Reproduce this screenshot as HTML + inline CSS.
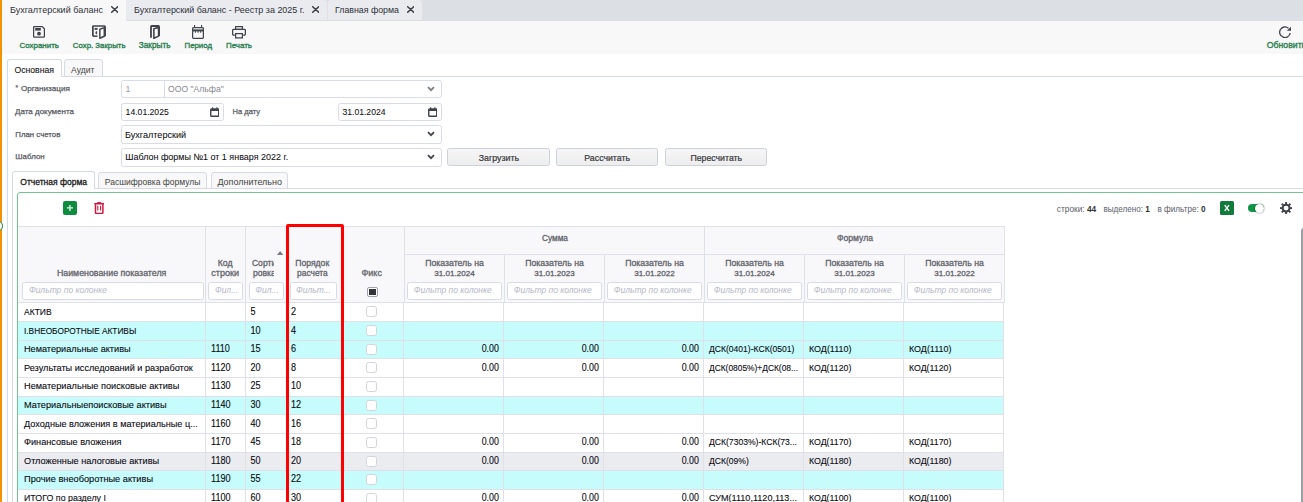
<!DOCTYPE html>
<html><head><meta charset="utf-8"><style>
html,body{margin:0;padding:0;}
body{width:1303px;height:502px;overflow:hidden;position:relative;background:#fff;font-family:"Liberation Sans", sans-serif;}
.t{position:absolute;white-space:nowrap;line-height:1;}
.b{position:absolute;}
</style></head><body>
<div class="b" style="left:0.00px;top:0.00px;width:1303.00px;height:20.60px;background:#dcdfe4"></div>
<div class="b" style="left:2.00px;top:0.00px;width:124.00px;height:21.00px;background:#f8f8f8"></div>
<div class="b" style="left:126.00px;top:0.00px;width:201.00px;height:20.20px;background:#e9ebef;border-radius:0 3px 0 0"></div>
<div class="b" style="left:328.00px;top:0.00px;width:94.00px;height:20.20px;background:#e9ebef;border-radius:3px 3px 0 0"></div>
<div class="t" style="left:10.00px;top:6.00px;font-size:9.02px;color:#2e3038;font-weight:400;">Бухгалтерский баланс</div>
<div class="t" style="left:134.00px;top:6.00px;font-size:8.96px;color:#2e3038;font-weight:400;">Бухгалтерский баланс - Реестр за 2025 г.</div>
<div class="t" style="left:335.00px;top:6.00px;font-size:8.81px;color:#2e3038;font-weight:400;">Главная форма</div>
<svg class="b" style="left:110.7px;top:5.9px" width="7.4" height="7" viewBox="0 0 7.4 7"><path d="M0.7 0.7L6.7 6.3M6.7 0.7L0.7 6.3" stroke="#3c3f48" stroke-width="1.55" stroke-linecap="round"/></svg>
<svg class="b" style="left:311.8px;top:5.9px" width="7.4" height="7" viewBox="0 0 7.4 7"><path d="M0.7 0.7L6.7 6.3M6.7 0.7L0.7 6.3" stroke="#3c3f48" stroke-width="1.55" stroke-linecap="round"/></svg>
<svg class="b" style="left:406.7px;top:5.9px" width="7.4" height="7" viewBox="0 0 7.4 7"><path d="M0.7 0.7L6.7 6.3M6.7 0.7L0.7 6.3" stroke="#3c3f48" stroke-width="1.55" stroke-linecap="round"/></svg>
<div class="b" style="left:2.00px;top:20.60px;width:1301.00px;height:33.00px;background:#f8f8f8"></div>
<div class="t" style="left:19.50px;top:42.00px;font-size:7.95px;color:#2a8050;font-weight:400;-webkit-text-stroke:0.35px #2a8050;">Сохранить</div>
<div class="t" style="left:72.80px;top:42.00px;font-size:7.83px;color:#2a8050;font-weight:400;-webkit-text-stroke:0.35px #2a8050;">Сохр. Закрыть</div>
<div class="t" style="left:138.80px;top:42.00px;font-size:8.23px;color:#2a8050;font-weight:400;-webkit-text-stroke:0.35px #2a8050;">Закрыть</div>
<div class="t" style="left:184.50px;top:42.00px;font-size:7.84px;color:#2a8050;font-weight:400;-webkit-text-stroke:0.35px #2a8050;">Период</div>
<div class="t" style="left:226.00px;top:42.00px;font-size:7.94px;color:#2a8050;font-weight:400;-webkit-text-stroke:0.35px #2a8050;">Печать</div>
<div class="t" style="left:1266.70px;top:41.00px;font-size:8.72px;color:#2a8050;font-weight:400;-webkit-text-stroke:0.35px #2a8050;">Обновить</div>
<svg class="b" style="left:33px;top:26px" width="12" height="12" viewBox="0 0 12 12"><path d="M1.4 0.6H9.2L11.4 2.8V10.4Q11.4 11 10.8 11H1.2Q0.6 11 0.6 10.4V1.4Q0.6 0.6 1.4 0.6Z" fill="none" stroke="#40434c" stroke-width="1.25" stroke-linejoin="round"/><rect x="2.2" y="2" width="5.6" height="2.6" fill="#40434c"/><circle cx="6" cy="7.7" r="1.9" fill="#40434c"/></svg>
<svg class="b" style="left:92px;top:25px" width="14" height="14" viewBox="0 0 14 14"><path d="M0.85 11.2V1.6Q0.85 1 1.5 1H12.4Q13.1 1 13.1 1.7V11.2" fill="none" stroke="#40434c" stroke-width="1.7"/><path d="M0.85 11.2H5.5" stroke="#40434c" stroke-width="1.5"/><path d="M7.85 4.2L12.3 2.6V11.2L7.85 13.2Z" fill="#fff" stroke="#40434c" stroke-width="1.5" stroke-linejoin="round"/><rect x="2.6" y="2.9" width="2.9" height="2" fill="#40434c"/><path d="M5.1 5.9A1.75 1.75 0 0 0 5.1 9.4Z" fill="#40434c"/></svg>
<svg class="b" style="left:150px;top:25px" width="10" height="14" viewBox="0 0 10 14"><path d="M1 12.8V1.6Q1 1 1.6 1H8.4Q9.1 1 9.1 1.7V11" fill="none" stroke="#40434c" stroke-width="1.8"/><path d="M3.9 3.8L8.6 2.2V11.1L3.9 13.3Z" fill="#fff" stroke="#40434c" stroke-width="1.6" stroke-linejoin="round"/></svg>
<svg class="b" style="left:192px;top:25px" width="12" height="14" viewBox="0 0 12 14"><rect x="0.6" y="2.6" width="10.8" height="10.8" rx="1.2" fill="none" stroke="#40434c" stroke-width="1.25"/><rect x="0.6" y="4.4" width="10.8" height="2" fill="#40434c"/><rect x="2" y="0" width="1.1" height="3" fill="#40434c"/><rect x="9" y="0" width="1.1" height="3" fill="#40434c"/><rect x="2.9" y="6" width="1" height="1.8" fill="#40434c"/><rect x="5.6" y="6" width="1" height="1.8" fill="#40434c"/><rect x="8.2" y="6" width="1" height="1.8" fill="#40434c"/></svg>
<svg class="b" style="left:232px;top:26px" width="14" height="12.5" viewBox="0 0 14 12.5"><rect x="3.6" y="0.6" width="6.8" height="2.8" fill="none" stroke="#40434c" stroke-width="1.25"/><path d="M2.8 9.1H1.7Q0.6 9.1 0.6 8V4.5Q0.6 3.4 1.7 3.4H12.3Q13.4 3.4 13.4 4.5V8Q13.4 9.1 12.3 9.1H11.2" fill="none" stroke="#40434c" stroke-width="1.25"/><rect x="3.6" y="7.6" width="6.8" height="4.3" fill="none" stroke="#40434c" stroke-width="1.25"/></svg>
<svg class="b" style="left:1279px;top:25.8px" width="12.5" height="12" viewBox="0 0 12.5 12"><path d="M9.5 2.3A5.3 5.3 0 1 0 11.2 7" fill="none" stroke="#40434c" stroke-width="1.3"/><path d="M7.8 4.8H12V0.8Z" fill="#40434c"/></svg>
<div class="b" style="left:0.00px;top:0.00px;width:2.00px;height:502.00px;background:#f39200"></div>
<div class="b" style="left:7.50px;top:76.00px;width:1295.50px;height:1.00px;background:#d6dae5"></div>
<div class="b" style="left:7.00px;top:59.20px;width:55.00px;height:18.30px;background:#fff;border:1px solid #d6dae5;border-bottom:none;border-radius:3px 3px 0 0;box-sizing:border-box"></div>
<div class="b" style="left:63.50px;top:59.20px;width:39.00px;height:17.80px;background:#f8f8f8;border:1px solid #d6dae5;border-radius:3px 3px 0 0;box-sizing:border-box"></div>
<div class="t" style="left:14.50px;top:66.00px;font-size:8.65px;color:#1a1a20;font-weight:400;-webkit-text-stroke:0.12px #1a1a20;">Основная</div>
<div class="t" style="left:71.00px;top:66.00px;font-size:8.63px;color:#444;font-weight:400;">Аудит</div>
<div class="b" style="left:7.00px;top:77.00px;width:1.00px;height:425.00px;background:#d6dae5"></div>
<div class="t" style="left:15.40px;top:84.80px;font-size:6.5px;color:#585b63;font-weight:400;-webkit-text-stroke:0.2px #585b63;">*</div>
<div class="t" style="left:21.00px;top:85.00px;font-size:8.12px;color:#585b63;font-weight:400;-webkit-text-stroke:0.25px #585b63;">Организация</div>
<div class="t" style="left:15.10px;top:108.20px;font-size:7.99px;color:#585b63;font-weight:400;-webkit-text-stroke:0.25px #585b63;">Дата документа</div>
<div class="t" style="left:232.50px;top:108.20px;font-size:7.55px;color:#585b63;font-weight:400;-webkit-text-stroke:0.25px #585b63;">На дату</div>
<div class="t" style="left:15.30px;top:131.20px;font-size:7.84px;color:#585b63;font-weight:400;-webkit-text-stroke:0.25px #585b63;">План счетов</div>
<div class="t" style="left:15.30px;top:153.00px;font-size:7.94px;color:#585b63;font-weight:400;-webkit-text-stroke:0.25px #585b63;">Шаблон</div>
<div class="b" style="left:121.30px;top:80.00px;width:320.70px;height:18.20px;background:#fff;border:1px solid #d9dce6;border-radius:2.5px;box-sizing:border-box"></div>
<div class="b" style="left:164.20px;top:80.60px;width:1.00px;height:17.00px;background:#d9dce6"></div>
<div class="t" style="left:125.60px;top:85.40px;font-size:8.8px;color:#9a9aa0;font-weight:400;transform:scale(1,1.04);transform-origin:0 7.00px;">1</div>
<div class="t" style="left:168.00px;top:85.40px;font-size:9.2px;color:#88888e;font-weight:400;transform:scale(0.9389,1.04);transform-origin:0 7.00px;">ООО "Альфа"</div>
<div class="b" style="left:121.30px;top:103.00px;width:102.70px;height:18.00px;background:#fff;border:1px solid #d9dce6;border-radius:2.5px;box-sizing:border-box"></div>
<div class="t" style="left:125.60px;top:108.00px;font-size:8.65px;color:#0e0e12;font-weight:400;-webkit-text-stroke:0.06px #0e0e12;transform:scale(1,1.02);transform-origin:0 7.00px;">14.01.2025</div>
<div class="b" style="left:338.20px;top:103.00px;width:103.80px;height:18.00px;background:#fff;border:1px solid #d9dce6;border-radius:2.5px;box-sizing:border-box"></div>
<div class="t" style="left:342.40px;top:108.00px;font-size:8.65px;color:#0e0e12;font-weight:400;-webkit-text-stroke:0.06px #0e0e12;transform:scale(1,1.02);transform-origin:0 7.00px;">31.01.2024</div>
<div class="b" style="left:121.30px;top:125.30px;width:320.70px;height:18.70px;background:#fff;border:1px solid #d9dce6;border-radius:2.5px;box-sizing:border-box"></div>
<div class="t" style="left:125.00px;top:131.10px;font-size:9.09px;color:#0e0e12;font-weight:400;-webkit-text-stroke:0.06px #0e0e12;transform:scale(1,1.02);transform-origin:0 7.00px;">Бухгалтерский</div>
<div class="b" style="left:121.30px;top:148.20px;width:320.70px;height:18.80px;background:#fff;border:1px solid #d9dce6;border-radius:2.5px;box-sizing:border-box"></div>
<div class="t" style="left:125.20px;top:153.20px;font-size:8.97px;color:#0e0e12;font-weight:400;-webkit-text-stroke:0.06px #0e0e12;transform:scale(1,1.02);transform-origin:0 7.00px;">Шаблон формы №1 от 1 января 2022 г.</div>
<svg class="b" style="left:427px;top:86px" width="8" height="6" viewBox="0 0 8 6"><path d="M1 1.2L4 4.2L7 1.2" fill="none" stroke="#7c7e86" stroke-width="1.7"/></svg>
<svg class="b" style="left:427px;top:131px" width="8" height="6" viewBox="0 0 8 6"><path d="M1 1.2L4 4.2L7 1.2" fill="none" stroke="#40434c" stroke-width="1.7"/></svg>
<svg class="b" style="left:427px;top:154px" width="8" height="6" viewBox="0 0 8 6"><path d="M1 1.2L4 4.2L7 1.2" fill="none" stroke="#40434c" stroke-width="1.7"/></svg>
<svg class="b" style="left:209.8px;top:107px" width="9.5" height="10" viewBox="0 0 9.5 10"><rect x="0.75" y="2" width="8" height="7.3" rx="0.8" fill="none" stroke="#40434c" stroke-width="1.4"/><rect x="0.75" y="2" width="8" height="2" fill="#40434c"/><rect x="2" y="0.3" width="1.2" height="2" fill="#40434c"/><rect x="6.3" y="0.3" width="1.2" height="2" fill="#40434c"/></svg>
<svg class="b" style="left:427.8px;top:107px" width="9.5" height="10" viewBox="0 0 9.5 10"><rect x="0.75" y="2" width="8" height="7.3" rx="0.8" fill="none" stroke="#40434c" stroke-width="1.4"/><rect x="0.75" y="2" width="8" height="2" fill="#40434c"/><rect x="2" y="0.3" width="1.2" height="2" fill="#40434c"/><rect x="6.3" y="0.3" width="1.2" height="2" fill="#40434c"/></svg>
<div class="b" style="left:447.40px;top:148.40px;width:103.10px;height:17.90px;background:linear-gradient(#f6f6f7,#ededee);border:1px solid #cdd1dc;border-radius:2.5px;box-sizing:border-box"></div>
<div class="t" style="left:298.95px;width:400px;text-align:center;top:154.00px;font-size:8.83px;color:#3a3a40;font-weight:400;-webkit-text-stroke:0.22px #3a3a40;">Загрузить</div>
<div class="b" style="left:556.40px;top:148.40px;width:101.60px;height:17.90px;background:linear-gradient(#f6f6f7,#ededee);border:1px solid #cdd1dc;border-radius:2.5px;box-sizing:border-box"></div>
<div class="t" style="left:407.20px;width:400px;text-align:center;top:154.00px;font-size:8.78px;color:#3a3a40;font-weight:400;-webkit-text-stroke:0.22px #3a3a40;">Рассчитать</div>
<div class="b" style="left:665.30px;top:148.40px;width:102.00px;height:17.90px;background:linear-gradient(#f6f6f7,#ededee);border:1px solid #cdd1dc;border-radius:2.5px;box-sizing:border-box"></div>
<div class="t" style="left:516.30px;width:400px;text-align:center;top:154.00px;font-size:8.74px;color:#3a3a40;font-weight:400;-webkit-text-stroke:0.22px #3a3a40;">Пересчитать</div>
<div class="b" style="left:94.00px;top:188.00px;width:1209.00px;height:1.00px;background:#d6dae5"></div>
<div class="b" style="left:12.00px;top:171.20px;width:82.50px;height:18.30px;background:#fff;border:1px solid #d6dae5;border-bottom:none;border-radius:3px 3px 0 0;box-sizing:border-box"></div>
<div class="b" style="left:97.70px;top:171.50px;width:109.70px;height:17.50px;background:#f8f8f8;border:1px solid #d6dae5;border-radius:3px 3px 0 0;box-sizing:border-box"></div>
<div class="b" style="left:211.00px;top:171.50px;width:77.40px;height:17.50px;background:#f8f8f8;border:1px solid #d6dae5;border-radius:3px 3px 0 0;box-sizing:border-box"></div>
<div class="t" style="left:20.30px;top:178.30px;font-size:8.53px;color:#1a1a20;font-weight:400;-webkit-text-stroke:0.3px #1a1a20;">Отчетная форма</div>
<div class="t" style="left:104.80px;top:178.30px;font-size:8.53px;color:#444;font-weight:400;">Расшифровка формулы</div>
<div class="t" style="left:217.40px;top:178.30px;font-size:8.98px;color:#444;font-weight:400;">Дополнительно</div>
<div class="b" style="left:12.00px;top:189.00px;width:1.00px;height:313.00px;background:#d6dae5"></div>
<div class="b" style="left:17.30px;top:192.20px;width:1292.70px;height:327.80px;border:1px solid #72c593;border-radius:3px;box-sizing:border-box"></div>
<div class="b" style="left:63px;top:201px;width:13.8px;height:13.9px;background:#0d8c40;border-radius:2px"></div>
<svg class="b" style="left:63px;top:201px" width="13.8" height="13.9" viewBox="0 0 13.8 13.9"><path d="M6.95 3.9V10M3.9 6.95H10" stroke="#e6f3ea" stroke-width="1.35"/></svg>
<svg class="b" style="left:93.9px;top:202px" width="10.4" height="12.4" viewBox="0 0 10.4 12.4"><path d="M0.3 1.75H10.1" stroke="#d0173f" stroke-width="1.5"/><path d="M3.4 1.6V0.9Q3.4 0.3 4 0.3H6.4Q7 0.3 7 0.9V1.6" fill="#d0173f" stroke="#d0173f" stroke-width="0.8"/><path d="M1.5 2.2V10.6Q1.5 11.5 2.4 11.5H8Q8.9 11.5 8.9 10.6V2.2" fill="none" stroke="#d0173f" stroke-width="1.5"/><path d="M3.8 3.7V8.6M6.6 3.7V8.6" stroke="#d0173f" stroke-width="1.1"/></svg>
<div class="t" style="left:1056.80px;top:204.50px;font-size:8.32px;color:#5a5e6a;font-weight:400;">строки: <b style="color:#333">44</b></div>
<div class="t" style="left:1103.40px;top:205.50px;font-size:8.15px;color:#5a5e6a;font-weight:400;">выделено: <b style="color:#333">1</b></div>
<div class="t" style="left:1157.40px;top:205.50px;font-size:8.19px;color:#5a5e6a;font-weight:400;">в фильтре: <b style="color:#333">0</b></div>
<div class="b" style="left:1220.1px;top:201.1px;width:13.8px;height:13.8px;background:#137a3d;border-radius:1.5px"></div>
<svg class="b" style="left:1220.1px;top:201.1px" width="13.8" height="13.8" viewBox="0 0 13.8 13.8"><path d="M4.7 4.2L9 9.9M9 4.2L4.7 9.9" stroke="#fff" stroke-width="1.35"/></svg>
<div class="b" style="left:1247.8px;top:203.9px;width:16px;height:8.3px;background:linear-gradient(90deg,#109445 55%,#3aa462);border-radius:4.2px"></div>
<div class="b" style="left:1255.1px;top:203.9px;width:9px;height:9px;background:#fff;border-radius:50%;box-shadow:0 0 1.6px 0.3px rgba(0,0,0,.45)"></div>
<svg class="b" style="left:1279.9px;top:201.8px" width="12.2" height="12.2" viewBox="-6.1 -6.1 12.2 12.2"><g fill="#40434c"><rect x="-0.95" y="-6.1" width="1.9" height="2.6" transform="rotate(0)"/><rect x="-0.95" y="-6.1" width="1.9" height="2.6" transform="rotate(45)"/><rect x="-0.95" y="-6.1" width="1.9" height="2.6" transform="rotate(90)"/><rect x="-0.95" y="-6.1" width="1.9" height="2.6" transform="rotate(135)"/><rect x="-0.95" y="-6.1" width="1.9" height="2.6" transform="rotate(180)"/><rect x="-0.95" y="-6.1" width="1.9" height="2.6" transform="rotate(225)"/><rect x="-0.95" y="-6.1" width="1.9" height="2.6" transform="rotate(270)"/><rect x="-0.95" y="-6.1" width="1.9" height="2.6" transform="rotate(315)"/></g><circle r="3.45" fill="none" stroke="#40434c" stroke-width="2"/></svg>
<div class="b" style="left:1301.00px;top:228.00px;width:3.00px;height:274.00px;background:#9c9ea8;border-radius:3px 0 0 0"></div>
<div class="b" style="left:18.30px;top:226.00px;width:986.70px;height:76.00px;background:#f8f8fa"></div>
<div class="b" style="left:18.30px;top:226.00px;width:986.70px;height:1.00px;background:#dfe0e8"></div>
<div class="b" style="left:18.30px;top:303.00px;width:984.70px;height:18.00px;background:#fff"></div>
<div class="b" style="left:18.30px;top:321.00px;width:985.70px;height:1.00px;background:#dfe0e8"></div>
<div class="b" style="left:18.30px;top:322.00px;width:984.70px;height:18.00px;background:#c6fcfc"></div>
<div class="b" style="left:18.30px;top:340.00px;width:985.70px;height:1.00px;background:#dfe0e8"></div>
<div class="b" style="left:18.30px;top:341.00px;width:984.70px;height:17.00px;background:#c6fcfc"></div>
<div class="b" style="left:18.30px;top:358.00px;width:985.70px;height:1.00px;background:#dfe0e8"></div>
<div class="b" style="left:18.30px;top:359.00px;width:984.70px;height:18.00px;background:#fff"></div>
<div class="b" style="left:18.30px;top:377.00px;width:985.70px;height:1.00px;background:#dfe0e8"></div>
<div class="b" style="left:18.30px;top:378.00px;width:984.70px;height:18.00px;background:#fff"></div>
<div class="b" style="left:18.30px;top:396.00px;width:985.70px;height:1.00px;background:#dfe0e8"></div>
<div class="b" style="left:18.30px;top:397.00px;width:984.70px;height:17.00px;background:#c6fcfc"></div>
<div class="b" style="left:18.30px;top:414.00px;width:985.70px;height:1.00px;background:#dfe0e8"></div>
<div class="b" style="left:18.30px;top:415.00px;width:984.70px;height:18.00px;background:#fff"></div>
<div class="b" style="left:18.30px;top:433.00px;width:985.70px;height:1.00px;background:#dfe0e8"></div>
<div class="b" style="left:18.30px;top:434.00px;width:984.70px;height:18.00px;background:#fff"></div>
<div class="b" style="left:18.30px;top:452.00px;width:985.70px;height:1.00px;background:#dfe0e8"></div>
<div class="b" style="left:18.30px;top:453.00px;width:984.70px;height:17.00px;background:#ebecf0"></div>
<div class="b" style="left:18.30px;top:470.00px;width:985.70px;height:1.00px;background:#dfe0e8"></div>
<div class="b" style="left:18.30px;top:471.00px;width:984.70px;height:18.00px;background:#c6fcfc"></div>
<div class="b" style="left:18.30px;top:489.00px;width:985.70px;height:1.00px;background:#dfe0e8"></div>
<div class="b" style="left:18.30px;top:490.00px;width:984.70px;height:17.00px;background:#fff"></div>
<div class="b" style="left:18.30px;top:507.00px;width:985.70px;height:1.00px;background:#dfe0e8"></div>
<div class="b" style="left:18.30px;top:302.00px;width:986.70px;height:1.00px;background:#dfe0e8"></div>
<div class="b" style="left:404.00px;top:254.00px;width:601.00px;height:1.00px;background:#dfe0e8"></div>
<div class="b" style="left:205.00px;top:226.00px;width:1.00px;height:76.00px;background:#dfe0e8"></div>
<div class="b" style="left:205.00px;top:302.00px;width:1.00px;height:200.00px;background:#dfe0e8"></div>
<div class="b" style="left:245.00px;top:226.00px;width:1.00px;height:76.00px;background:#dfe0e8"></div>
<div class="b" style="left:245.00px;top:302.00px;width:1.00px;height:200.00px;background:#dfe0e8"></div>
<div class="b" style="left:287.00px;top:226.00px;width:1.00px;height:76.00px;background:#dfe0e8"></div>
<div class="b" style="left:287.00px;top:302.00px;width:1.00px;height:200.00px;background:#dfe0e8"></div>
<div class="b" style="left:342.00px;top:226.00px;width:1.00px;height:76.00px;background:#dfe0e8"></div>
<div class="b" style="left:342.00px;top:302.00px;width:1.00px;height:200.00px;background:#dfe0e8"></div>
<div class="b" style="left:404.00px;top:226.00px;width:1.00px;height:76.00px;background:#dfe0e8"></div>
<div class="b" style="left:403.00px;top:302.00px;width:1.00px;height:200.00px;background:#dfe0e8"></div>
<div class="b" style="left:504.00px;top:254.00px;width:1.00px;height:48.00px;background:#dfe0e8"></div>
<div class="b" style="left:503.00px;top:302.00px;width:1.00px;height:200.00px;background:#dfe0e8"></div>
<div class="b" style="left:604.00px;top:254.00px;width:1.00px;height:48.00px;background:#dfe0e8"></div>
<div class="b" style="left:603.00px;top:302.00px;width:1.00px;height:200.00px;background:#dfe0e8"></div>
<div class="b" style="left:704.00px;top:226.00px;width:1.00px;height:76.00px;background:#dfe0e8"></div>
<div class="b" style="left:703.00px;top:302.00px;width:1.00px;height:200.00px;background:#dfe0e8"></div>
<div class="b" style="left:804.00px;top:254.00px;width:1.00px;height:48.00px;background:#dfe0e8"></div>
<div class="b" style="left:803.00px;top:302.00px;width:1.00px;height:200.00px;background:#dfe0e8"></div>
<div class="b" style="left:904.00px;top:254.00px;width:1.00px;height:48.00px;background:#dfe0e8"></div>
<div class="b" style="left:903.00px;top:302.00px;width:1.00px;height:200.00px;background:#dfe0e8"></div>
<div class="b" style="left:1004.00px;top:226.00px;width:1.00px;height:76.00px;background:#dfe0e8"></div>
<div class="b" style="left:1003.00px;top:302.00px;width:1.00px;height:200.00px;background:#dfe0e8"></div>
<div class="t" style="left:-88.40px;width:400px;text-align:center;top:269.20px;font-size:8.84px;color:#62646c;font-weight:400;-webkit-text-stroke:0.3px #62646c;">Наименование показателя</div>
<div class="t" style="left:25.10px;width:400px;text-align:center;top:259.10px;font-size:8.7px;color:#62646c;font-weight:400;-webkit-text-stroke:0.3px #62646c;">Код</div>
<div class="t" style="left:25.10px;width:400px;text-align:center;top:268.70px;font-size:9.03px;color:#62646c;font-weight:400;-webkit-text-stroke:0.3px #62646c;">строки</div>
<div class="b" style="left:249px;top:256px;width:25px;height:24px;overflow:hidden"><div class="t" style="left:2.9px;top:3.32px;font-size:8.6px;color:#62646c;-webkit-text-stroke:0.3px #62646c">Сорти</div><div class="t" style="left:4px;top:12.82px;font-size:8.6px;color:#62646c;-webkit-text-stroke:0.3px #62646c">ровка</div></div>
<div class="t" style="left:112.20px;width:400px;text-align:center;top:259.10px;font-size:8.63px;color:#62646c;font-weight:400;-webkit-text-stroke:0.3px #62646c;">Порядок</div>
<div class="t" style="left:112.40px;width:400px;text-align:center;top:268.70px;font-size:8.42px;color:#62646c;font-weight:400;-webkit-text-stroke:0.3px #62646c;">расчета</div>
<div class="t" style="left:171.70px;width:400px;text-align:center;top:269.10px;font-size:9.0px;color:#62646c;font-weight:400;-webkit-text-stroke:0.3px #62646c;">Фикс</div>
<div class="t" style="left:355.00px;width:400px;text-align:center;top:235.20px;font-size:8.27px;color:#62646c;font-weight:400;-webkit-text-stroke:0.3px #62646c;">Сумма</div>
<div class="t" style="left:655.00px;width:400px;text-align:center;top:234.20px;font-size:8.62px;color:#62646c;font-weight:400;-webkit-text-stroke:0.3px #62646c;">Формула</div>
<div class="t" style="left:254.50px;width:400px;text-align:center;top:259.30px;font-size:8.72px;color:#62646c;font-weight:400;-webkit-text-stroke:0.3px #62646c;">Показатель на</div>
<div class="t" style="left:254.50px;width:400px;text-align:center;top:270.10px;font-size:8.05px;color:#62646c;font-weight:400;-webkit-text-stroke:0.3px #62646c;">31.01.2024</div>
<div class="t" style="left:354.50px;width:400px;text-align:center;top:259.30px;font-size:8.72px;color:#62646c;font-weight:400;-webkit-text-stroke:0.3px #62646c;">Показатель на</div>
<div class="t" style="left:354.50px;width:400px;text-align:center;top:270.10px;font-size:8.05px;color:#62646c;font-weight:400;-webkit-text-stroke:0.3px #62646c;">31.01.2023</div>
<div class="t" style="left:454.50px;width:400px;text-align:center;top:259.30px;font-size:8.72px;color:#62646c;font-weight:400;-webkit-text-stroke:0.3px #62646c;">Показатель на</div>
<div class="t" style="left:454.50px;width:400px;text-align:center;top:270.10px;font-size:8.05px;color:#62646c;font-weight:400;-webkit-text-stroke:0.3px #62646c;">31.01.2022</div>
<div class="t" style="left:554.50px;width:400px;text-align:center;top:259.30px;font-size:8.72px;color:#62646c;font-weight:400;-webkit-text-stroke:0.3px #62646c;">Показатель на</div>
<div class="t" style="left:554.50px;width:400px;text-align:center;top:270.10px;font-size:8.05px;color:#62646c;font-weight:400;-webkit-text-stroke:0.3px #62646c;">31.01.2024</div>
<div class="t" style="left:654.50px;width:400px;text-align:center;top:259.30px;font-size:8.72px;color:#62646c;font-weight:400;-webkit-text-stroke:0.3px #62646c;">Показатель на</div>
<div class="t" style="left:654.50px;width:400px;text-align:center;top:270.10px;font-size:8.05px;color:#62646c;font-weight:400;-webkit-text-stroke:0.3px #62646c;">31.01.2023</div>
<div class="t" style="left:754.50px;width:400px;text-align:center;top:259.30px;font-size:8.72px;color:#62646c;font-weight:400;-webkit-text-stroke:0.3px #62646c;">Показатель на</div>
<div class="t" style="left:754.50px;width:400px;text-align:center;top:270.10px;font-size:8.05px;color:#62646c;font-weight:400;-webkit-text-stroke:0.3px #62646c;">31.01.2022</div>
<svg class="b" style="left:276.6px;top:250.9px" width="6.3" height="3.9" viewBox="0 0 6.3 3.9"><path d="M0 3.9L3.15 0L6.3 3.9Z" fill="#7a7a80"/></svg>
<div class="b" style="left:22.40px;top:282.4px;width:181.20px;height:17.2px;border:1px solid #d8dbe5;border-radius:2.5px;box-sizing:border-box;background:#fff;overflow:hidden"><div class="t" style="left:5.5px;top:2.60px;font-size:8.5px;color:#b4b7c6;font-style:italic">Фильтр по колонке</div></div>
<div class="b" style="left:208.40px;top:282.4px;width:35.00px;height:17.2px;border:1px solid #d8dbe5;border-radius:2.5px;box-sizing:border-box;background:#fff;overflow:hidden"><div class="t" style="left:5.5px;top:2.60px;font-size:8.5px;color:#b4b7c6;font-style:italic">Фил...</div></div>
<div class="b" style="left:248.80px;top:282.4px;width:34.90px;height:17.2px;border:1px solid #d8dbe5;border-radius:2.5px;box-sizing:border-box;background:#fff;overflow:hidden"><div class="t" style="left:5.5px;top:2.60px;font-size:8.5px;color:#b4b7c6;font-style:italic">Фил...</div></div>
<div class="b" style="left:289.50px;top:282.4px;width:47.90px;height:17.2px;border:1px solid #d8dbe5;border-radius:2.5px;box-sizing:border-box;background:#fff;overflow:hidden"><div class="t" style="left:5.5px;top:2.60px;font-size:8.5px;color:#b4b7c6;font-style:italic">Фильт...</div></div>
<div class="b" style="left:407.20px;top:282.4px;width:94.50px;height:17.2px;border:1px solid #d8dbe5;border-radius:2.5px;box-sizing:border-box;background:#fff;overflow:hidden"><div class="t" style="left:5.5px;top:2.60px;font-size:8.5px;color:#b4b7c6;font-style:italic">Фильтр по колонке</div></div>
<div class="b" style="left:507.20px;top:282.4px;width:94.50px;height:17.2px;border:1px solid #d8dbe5;border-radius:2.5px;box-sizing:border-box;background:#fff;overflow:hidden"><div class="t" style="left:5.5px;top:2.60px;font-size:8.5px;color:#b4b7c6;font-style:italic">Фильтр по колонке</div></div>
<div class="b" style="left:607.20px;top:282.4px;width:94.50px;height:17.2px;border:1px solid #d8dbe5;border-radius:2.5px;box-sizing:border-box;background:#fff;overflow:hidden"><div class="t" style="left:5.5px;top:2.60px;font-size:8.5px;color:#b4b7c6;font-style:italic">Фильтр по колонке</div></div>
<div class="b" style="left:707.20px;top:282.4px;width:94.50px;height:17.2px;border:1px solid #d8dbe5;border-radius:2.5px;box-sizing:border-box;background:#fff;overflow:hidden"><div class="t" style="left:5.5px;top:2.60px;font-size:8.5px;color:#b4b7c6;font-style:italic">Фильтр по колонке</div></div>
<div class="b" style="left:807.20px;top:282.4px;width:94.50px;height:17.2px;border:1px solid #d8dbe5;border-radius:2.5px;box-sizing:border-box;background:#fff;overflow:hidden"><div class="t" style="left:5.5px;top:2.60px;font-size:8.5px;color:#b4b7c6;font-style:italic">Фильтр по колонке</div></div>
<div class="b" style="left:907.20px;top:282.4px;width:94.50px;height:17.2px;border:1px solid #d8dbe5;border-radius:2.5px;box-sizing:border-box;background:#fff;overflow:hidden"><div class="t" style="left:5.5px;top:2.60px;font-size:8.5px;color:#b4b7c6;font-style:italic">Фильтр по колонке</div></div>
<div class="b" style="left:367.3px;top:286.8px;width:10.7px;height:10px;border:1px solid #a0a2aa;border-radius:2px;box-sizing:border-box;background:#fff"></div>
<div class="b" style="left:369.3px;top:288.7px;width:6.7px;height:6.2px;background:#33353d"></div>
<div class="t" style="left:23.80px;top:307.90px;font-size:9.2px;color:#0a0a10;font-weight:400;-webkit-text-stroke:0.1px #0a0a10;transform:scale(0.9275,1.07);transform-origin:0 7.00px;">АКТИВ</div>
<div class="t" style="left:250.40px;top:307.90px;font-size:9.1px;color:#0a0a10;font-weight:400;-webkit-text-stroke:0.1px #0a0a10;transform:scale(1,1.2);transform-origin:0 7.00px;">5</div>
<div class="t" style="left:291.00px;top:307.90px;font-size:9.1px;color:#0a0a10;font-weight:400;-webkit-text-stroke:0.1px #0a0a10;transform:scale(1,1.2);transform-origin:0 7.00px;">2</div>
<div class="b" style="left:366.2px;top:305.90px;width:10.8px;height:11px;border:1px solid #d3d5dc;border-radius:2.6px;box-sizing:border-box;background:#fff"></div>
<div class="t" style="left:23.80px;top:326.52px;font-size:9.2px;color:#0a0a10;font-weight:400;-webkit-text-stroke:0.1px #0a0a10;transform:scale(0.903,1.07);transform-origin:0 7.00px;">I.ВНЕОБОРОТНЫЕ АКТИВЫ</div>
<div class="t" style="left:250.40px;top:326.52px;font-size:9.1px;color:#0a0a10;font-weight:400;-webkit-text-stroke:0.1px #0a0a10;transform:scale(1,1.2);transform-origin:0 7.00px;">10</div>
<div class="t" style="left:291.00px;top:326.52px;font-size:9.1px;color:#0a0a10;font-weight:400;-webkit-text-stroke:0.1px #0a0a10;transform:scale(1,1.2);transform-origin:0 7.00px;">4</div>
<div class="b" style="left:366.2px;top:324.90px;width:10.8px;height:11px;border:1px solid #d3d5dc;border-radius:2.6px;box-sizing:border-box;background:#fff"></div>
<div class="t" style="left:23.80px;top:345.14px;font-size:9.2px;color:#0a0a10;font-weight:400;-webkit-text-stroke:0.1px #0a0a10;transform:scale(0.9951,1.02);transform-origin:0 7.00px;">Нематериальные активы</div>
<div class="t" style="left:211.00px;top:345.14px;font-size:9.1px;color:#0a0a10;font-weight:400;-webkit-text-stroke:0.1px #0a0a10;transform:scale(1,1.2);transform-origin:0 7.00px;">1110</div>
<div class="t" style="left:250.40px;top:345.14px;font-size:9.1px;color:#0a0a10;font-weight:400;-webkit-text-stroke:0.1px #0a0a10;transform:scale(1,1.2);transform-origin:0 7.00px;">15</div>
<div class="t" style="left:291.00px;top:345.14px;font-size:9.1px;color:#0a0a10;font-weight:400;-webkit-text-stroke:0.1px #0a0a10;transform:scale(1,1.2);transform-origin:0 7.00px;">6</div>
<div class="b" style="left:366.2px;top:343.90px;width:10.8px;height:11px;border:1px solid #d3d5dc;border-radius:2.6px;box-sizing:border-box;background:#fff"></div>
<div class="t" style="right:804.20px;top:345.14px;font-size:8.84px;color:#0a0a10;font-weight:400;-webkit-text-stroke:0.1px #0a0a10;transform:scale(1,1.2);transform-origin:100% 7.00px;">0.00</div>
<div class="t" style="right:704.20px;top:345.14px;font-size:8.84px;color:#0a0a10;font-weight:400;-webkit-text-stroke:0.1px #0a0a10;transform:scale(1,1.2);transform-origin:100% 7.00px;">0.00</div>
<div class="t" style="right:604.20px;top:345.14px;font-size:8.84px;color:#0a0a10;font-weight:400;-webkit-text-stroke:0.1px #0a0a10;transform:scale(1,1.2);transform-origin:100% 7.00px;">0.00</div>
<div class="t" style="left:709.00px;top:345.14px;font-size:8.8px;color:#0a0a10;font-weight:400;-webkit-text-stroke:0.1px #0a0a10;transform:scale(0.9732,1.1);transform-origin:0 7.00px;">ДСК(0401)-КСК(0501)</div>
<div class="t" style="left:809.00px;top:345.14px;font-size:8.8px;color:#0a0a10;font-weight:400;-webkit-text-stroke:0.1px #0a0a10;transform:scale(1.0151,1.1);transform-origin:0 7.00px;">КОД(1110)</div>
<div class="t" style="left:909.00px;top:345.14px;font-size:8.8px;color:#0a0a10;font-weight:400;-webkit-text-stroke:0.1px #0a0a10;transform:scale(1.0151,1.1);transform-origin:0 7.00px;">КОД(1110)</div>
<div class="t" style="left:23.80px;top:363.76px;font-size:9.2px;color:#0a0a10;font-weight:400;-webkit-text-stroke:0.1px #0a0a10;transform:scale(0.9962,1.02);transform-origin:0 7.00px;">Результаты исследований и разработок</div>
<div class="t" style="left:211.00px;top:363.76px;font-size:9.1px;color:#0a0a10;font-weight:400;-webkit-text-stroke:0.1px #0a0a10;transform:scale(1,1.2);transform-origin:0 7.00px;">1120</div>
<div class="t" style="left:250.40px;top:363.76px;font-size:9.1px;color:#0a0a10;font-weight:400;-webkit-text-stroke:0.1px #0a0a10;transform:scale(1,1.2);transform-origin:0 7.00px;">20</div>
<div class="t" style="left:291.00px;top:363.76px;font-size:9.1px;color:#0a0a10;font-weight:400;-webkit-text-stroke:0.1px #0a0a10;transform:scale(1,1.2);transform-origin:0 7.00px;">8</div>
<div class="b" style="left:366.2px;top:361.90px;width:10.8px;height:11px;border:1px solid #d3d5dc;border-radius:2.6px;box-sizing:border-box;background:#fff"></div>
<div class="t" style="right:804.20px;top:363.76px;font-size:8.84px;color:#0a0a10;font-weight:400;-webkit-text-stroke:0.1px #0a0a10;transform:scale(1,1.2);transform-origin:100% 7.00px;">0.00</div>
<div class="t" style="right:704.20px;top:363.76px;font-size:8.84px;color:#0a0a10;font-weight:400;-webkit-text-stroke:0.1px #0a0a10;transform:scale(1,1.2);transform-origin:100% 7.00px;">0.00</div>
<div class="t" style="right:604.20px;top:363.76px;font-size:8.84px;color:#0a0a10;font-weight:400;-webkit-text-stroke:0.1px #0a0a10;transform:scale(1,1.2);transform-origin:100% 7.00px;">0.00</div>
<div class="t" style="left:709.00px;top:363.76px;font-size:8.8px;color:#0a0a10;font-weight:400;-webkit-text-stroke:0.1px #0a0a10;transform:scale(0.9535,1.1);transform-origin:0 7.00px;">ДСК(0805%)+ДСК(08...</div>
<div class="t" style="left:809.00px;top:363.76px;font-size:8.8px;color:#0a0a10;font-weight:400;-webkit-text-stroke:0.1px #0a0a10;transform:scale(0.9994,1.1);transform-origin:0 7.00px;">КОД(1120)</div>
<div class="t" style="left:909.00px;top:363.76px;font-size:8.8px;color:#0a0a10;font-weight:400;-webkit-text-stroke:0.1px #0a0a10;transform:scale(0.9994,1.1);transform-origin:0 7.00px;">КОД(1120)</div>
<div class="t" style="left:23.80px;top:382.38px;font-size:9.2px;color:#0a0a10;font-weight:400;-webkit-text-stroke:0.1px #0a0a10;transform:scale(1.0001,1.02);transform-origin:0 7.00px;">Нематериальные поисковые активы</div>
<div class="t" style="left:211.00px;top:382.38px;font-size:9.1px;color:#0a0a10;font-weight:400;-webkit-text-stroke:0.1px #0a0a10;transform:scale(1,1.2);transform-origin:0 7.00px;">1130</div>
<div class="t" style="left:250.40px;top:382.38px;font-size:9.1px;color:#0a0a10;font-weight:400;-webkit-text-stroke:0.1px #0a0a10;transform:scale(1,1.2);transform-origin:0 7.00px;">25</div>
<div class="t" style="left:291.00px;top:382.38px;font-size:9.1px;color:#0a0a10;font-weight:400;-webkit-text-stroke:0.1px #0a0a10;transform:scale(1,1.2);transform-origin:0 7.00px;">10</div>
<div class="b" style="left:366.2px;top:380.90px;width:10.8px;height:11px;border:1px solid #d3d5dc;border-radius:2.6px;box-sizing:border-box;background:#fff"></div>
<div class="t" style="left:23.80px;top:401.00px;font-size:9.2px;color:#0a0a10;font-weight:400;-webkit-text-stroke:0.1px #0a0a10;transform:scale(1.0014,1.02);transform-origin:0 7.00px;">Материальныепоисковые активы</div>
<div class="t" style="left:211.00px;top:401.00px;font-size:9.1px;color:#0a0a10;font-weight:400;-webkit-text-stroke:0.1px #0a0a10;transform:scale(1,1.2);transform-origin:0 7.00px;">1140</div>
<div class="t" style="left:250.40px;top:401.00px;font-size:9.1px;color:#0a0a10;font-weight:400;-webkit-text-stroke:0.1px #0a0a10;transform:scale(1,1.2);transform-origin:0 7.00px;">30</div>
<div class="t" style="left:291.00px;top:401.00px;font-size:9.1px;color:#0a0a10;font-weight:400;-webkit-text-stroke:0.1px #0a0a10;transform:scale(1,1.2);transform-origin:0 7.00px;">12</div>
<div class="b" style="left:366.2px;top:399.90px;width:10.8px;height:11px;border:1px solid #d3d5dc;border-radius:2.6px;box-sizing:border-box;background:#fff"></div>
<div class="t" style="left:23.80px;top:419.62px;font-size:9.2px;color:#0a0a10;font-weight:400;-webkit-text-stroke:0.1px #0a0a10;transform:scale(0.9919,1.02);transform-origin:0 7.00px;">Доходные вложения в материальные ц...</div>
<div class="t" style="left:211.00px;top:419.62px;font-size:9.1px;color:#0a0a10;font-weight:400;-webkit-text-stroke:0.1px #0a0a10;transform:scale(1,1.2);transform-origin:0 7.00px;">1160</div>
<div class="t" style="left:250.40px;top:419.62px;font-size:9.1px;color:#0a0a10;font-weight:400;-webkit-text-stroke:0.1px #0a0a10;transform:scale(1,1.2);transform-origin:0 7.00px;">40</div>
<div class="t" style="left:291.00px;top:419.62px;font-size:9.1px;color:#0a0a10;font-weight:400;-webkit-text-stroke:0.1px #0a0a10;transform:scale(1,1.2);transform-origin:0 7.00px;">16</div>
<div class="b" style="left:366.2px;top:417.90px;width:10.8px;height:11px;border:1px solid #d3d5dc;border-radius:2.6px;box-sizing:border-box;background:#fff"></div>
<div class="t" style="left:23.80px;top:438.24px;font-size:9.2px;color:#0a0a10;font-weight:400;-webkit-text-stroke:0.1px #0a0a10;transform:scale(0.9966,1.02);transform-origin:0 7.00px;">Финансовые вложения</div>
<div class="t" style="left:211.00px;top:438.24px;font-size:9.1px;color:#0a0a10;font-weight:400;-webkit-text-stroke:0.1px #0a0a10;transform:scale(1,1.2);transform-origin:0 7.00px;">1170</div>
<div class="t" style="left:250.40px;top:438.24px;font-size:9.1px;color:#0a0a10;font-weight:400;-webkit-text-stroke:0.1px #0a0a10;transform:scale(1,1.2);transform-origin:0 7.00px;">45</div>
<div class="t" style="left:291.00px;top:438.24px;font-size:9.1px;color:#0a0a10;font-weight:400;-webkit-text-stroke:0.1px #0a0a10;transform:scale(1,1.2);transform-origin:0 7.00px;">18</div>
<div class="b" style="left:366.2px;top:436.90px;width:10.8px;height:11px;border:1px solid #d3d5dc;border-radius:2.6px;box-sizing:border-box;background:#fff"></div>
<div class="t" style="right:804.20px;top:438.24px;font-size:8.84px;color:#0a0a10;font-weight:400;-webkit-text-stroke:0.1px #0a0a10;transform:scale(1,1.2);transform-origin:100% 7.00px;">0.00</div>
<div class="t" style="right:704.20px;top:438.24px;font-size:8.84px;color:#0a0a10;font-weight:400;-webkit-text-stroke:0.1px #0a0a10;transform:scale(1,1.2);transform-origin:100% 7.00px;">0.00</div>
<div class="t" style="right:604.20px;top:438.24px;font-size:8.84px;color:#0a0a10;font-weight:400;-webkit-text-stroke:0.1px #0a0a10;transform:scale(1,1.2);transform-origin:100% 7.00px;">0.00</div>
<div class="t" style="left:709.00px;top:438.24px;font-size:8.8px;color:#0a0a10;font-weight:400;-webkit-text-stroke:0.1px #0a0a10;transform:scale(0.9757,1.1);transform-origin:0 7.00px;">ДСК(7303%)-КСК(73...</div>
<div class="t" style="left:809.00px;top:438.24px;font-size:8.8px;color:#0a0a10;font-weight:400;-webkit-text-stroke:0.1px #0a0a10;transform:scale(0.9994,1.1);transform-origin:0 7.00px;">КОД(1170)</div>
<div class="t" style="left:909.00px;top:438.24px;font-size:8.8px;color:#0a0a10;font-weight:400;-webkit-text-stroke:0.1px #0a0a10;transform:scale(0.9994,1.1);transform-origin:0 7.00px;">КОД(1170)</div>
<div class="t" style="left:23.80px;top:456.86px;font-size:9.2px;color:#0a0a10;font-weight:400;-webkit-text-stroke:0.1px #0a0a10;transform:scale(0.9971,1.02);transform-origin:0 7.00px;">Отложенные налоговые активы</div>
<div class="t" style="left:211.00px;top:456.86px;font-size:9.1px;color:#0a0a10;font-weight:400;-webkit-text-stroke:0.1px #0a0a10;transform:scale(1,1.2);transform-origin:0 7.00px;">1180</div>
<div class="t" style="left:250.40px;top:456.86px;font-size:9.1px;color:#0a0a10;font-weight:400;-webkit-text-stroke:0.1px #0a0a10;transform:scale(1,1.2);transform-origin:0 7.00px;">50</div>
<div class="t" style="left:291.00px;top:456.86px;font-size:9.1px;color:#0a0a10;font-weight:400;-webkit-text-stroke:0.1px #0a0a10;transform:scale(1,1.2);transform-origin:0 7.00px;">20</div>
<div class="b" style="left:366.2px;top:455.90px;width:10.8px;height:11px;border:1px solid #d3d5dc;border-radius:2.6px;box-sizing:border-box;background:#fff"></div>
<div class="t" style="right:804.20px;top:456.86px;font-size:8.84px;color:#0a0a10;font-weight:400;-webkit-text-stroke:0.1px #0a0a10;transform:scale(1,1.2);transform-origin:100% 7.00px;">0.00</div>
<div class="t" style="right:704.20px;top:456.86px;font-size:8.84px;color:#0a0a10;font-weight:400;-webkit-text-stroke:0.1px #0a0a10;transform:scale(1,1.2);transform-origin:100% 7.00px;">0.00</div>
<div class="t" style="right:604.20px;top:456.86px;font-size:8.84px;color:#0a0a10;font-weight:400;-webkit-text-stroke:0.1px #0a0a10;transform:scale(1,1.2);transform-origin:100% 7.00px;">0.00</div>
<div class="t" style="left:709.00px;top:456.86px;font-size:8.8px;color:#0a0a10;font-weight:400;-webkit-text-stroke:0.1px #0a0a10;transform:scale(0.9727,1.1);transform-origin:0 7.00px;">ДСК(09%)</div>
<div class="t" style="left:809.00px;top:456.86px;font-size:8.8px;color:#0a0a10;font-weight:400;-webkit-text-stroke:0.1px #0a0a10;transform:scale(0.9994,1.1);transform-origin:0 7.00px;">КОД(1180)</div>
<div class="t" style="left:909.00px;top:456.86px;font-size:8.8px;color:#0a0a10;font-weight:400;-webkit-text-stroke:0.1px #0a0a10;transform:scale(0.9994,1.1);transform-origin:0 7.00px;">КОД(1180)</div>
<div class="t" style="left:23.80px;top:475.48px;font-size:9.2px;color:#0a0a10;font-weight:400;-webkit-text-stroke:0.1px #0a0a10;transform:scale(1.0051,1.02);transform-origin:0 7.00px;">Прочие внеоборотные активы</div>
<div class="t" style="left:211.00px;top:475.48px;font-size:9.1px;color:#0a0a10;font-weight:400;-webkit-text-stroke:0.1px #0a0a10;transform:scale(1,1.2);transform-origin:0 7.00px;">1190</div>
<div class="t" style="left:250.40px;top:475.48px;font-size:9.1px;color:#0a0a10;font-weight:400;-webkit-text-stroke:0.1px #0a0a10;transform:scale(1,1.2);transform-origin:0 7.00px;">55</div>
<div class="t" style="left:291.00px;top:475.48px;font-size:9.1px;color:#0a0a10;font-weight:400;-webkit-text-stroke:0.1px #0a0a10;transform:scale(1,1.2);transform-origin:0 7.00px;">22</div>
<div class="b" style="left:366.2px;top:473.90px;width:10.8px;height:11px;border:1px solid #d3d5dc;border-radius:2.6px;box-sizing:border-box;background:#fff"></div>
<div class="t" style="left:23.80px;top:494.10px;font-size:9.2px;color:#0a0a10;font-weight:400;-webkit-text-stroke:0.1px #0a0a10;transform:scale(0.9623,1.02);transform-origin:0 7.00px;">ИТОГО по разделу I</div>
<div class="t" style="left:211.00px;top:494.10px;font-size:9.1px;color:#0a0a10;font-weight:400;-webkit-text-stroke:0.1px #0a0a10;transform:scale(1,1.2);transform-origin:0 7.00px;">1100</div>
<div class="t" style="left:250.40px;top:494.10px;font-size:9.1px;color:#0a0a10;font-weight:400;-webkit-text-stroke:0.1px #0a0a10;transform:scale(1,1.2);transform-origin:0 7.00px;">60</div>
<div class="t" style="left:291.00px;top:494.10px;font-size:9.1px;color:#0a0a10;font-weight:400;-webkit-text-stroke:0.1px #0a0a10;transform:scale(1,1.2);transform-origin:0 7.00px;">30</div>
<div class="b" style="left:366.2px;top:492.90px;width:10.8px;height:11px;border:1px solid #d3d5dc;border-radius:2.6px;box-sizing:border-box;background:#fff"></div>
<div class="t" style="right:804.20px;top:494.10px;font-size:8.84px;color:#0a0a10;font-weight:400;-webkit-text-stroke:0.1px #0a0a10;transform:scale(1,1.2);transform-origin:100% 7.00px;">0.00</div>
<div class="t" style="right:704.20px;top:494.10px;font-size:8.84px;color:#0a0a10;font-weight:400;-webkit-text-stroke:0.1px #0a0a10;transform:scale(1,1.2);transform-origin:100% 7.00px;">0.00</div>
<div class="t" style="right:604.20px;top:494.10px;font-size:8.84px;color:#0a0a10;font-weight:400;-webkit-text-stroke:0.1px #0a0a10;transform:scale(1,1.2);transform-origin:100% 7.00px;">0.00</div>
<div class="t" style="left:709.00px;top:494.10px;font-size:8.8px;color:#0a0a10;font-weight:400;-webkit-text-stroke:0.1px #0a0a10;transform:scale(1.0309,1.1);transform-origin:0 7.00px;">СУМ(1110,1120,113...</div>
<div class="t" style="left:809.00px;top:494.10px;font-size:8.8px;color:#0a0a10;font-weight:400;-webkit-text-stroke:0.1px #0a0a10;transform:scale(0.9994,1.1);transform-origin:0 7.00px;">КОД(1100)</div>
<div class="t" style="left:909.00px;top:494.10px;font-size:8.8px;color:#0a0a10;font-weight:400;-webkit-text-stroke:0.1px #0a0a10;transform:scale(0.9994,1.1);transform-origin:0 7.00px;">КОД(1100)</div>
<div class="b" style="left:286px;top:224px;width:57.8px;height:300px;border:3px solid #ff0000;border-radius:2px;box-sizing:border-box"></div>
<div class="b" style="left:-8.9px;top:219.8px;width:12px;height:12px;border:1.3px solid #1f8a3a;background:#fff;border-radius:50%;box-sizing:border-box"></div>
</body></html>
